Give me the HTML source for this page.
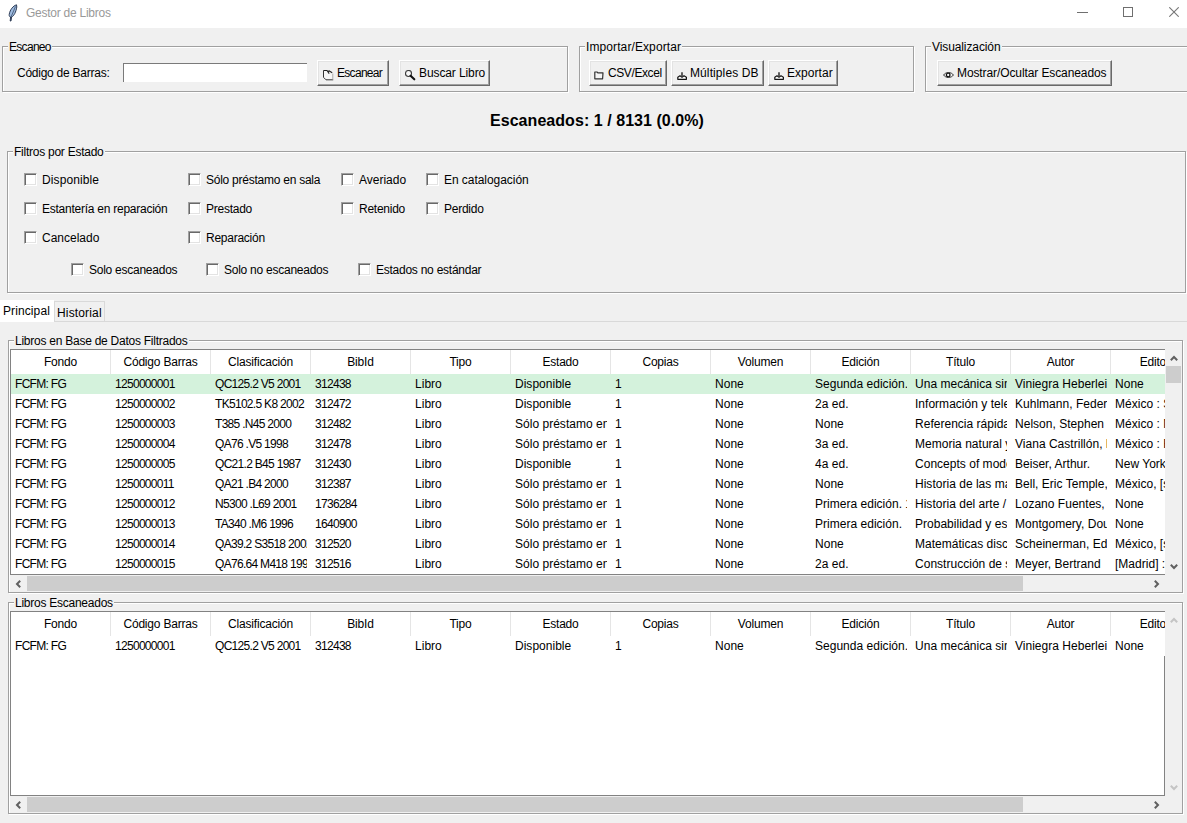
<!DOCTYPE html>
<html><head><meta charset="utf-8"><title>Gestor de Libros</title>
<style>
*{box-sizing:border-box;margin:0;padding:0}
html,body{width:1187px;height:823px;overflow:hidden}
body{position:relative;background:#f0f0f0;font-family:"Liberation Sans",sans-serif;font-size:12px;color:#000;letter-spacing:-0.25px}
.a{position:absolute;white-space:nowrap}
.title{position:absolute;left:0;top:0;width:1187px;height:28px;background:#fff}
.grp{position:absolute;border:1px solid #a0a0a0;box-shadow:1px 1px 0 #fff,inset 1px 1px 0 #fff}
.lbl{position:absolute;background:#f0f0f0;white-space:nowrap;line-height:14px;padding:1px 1px 0}
.btn{position:absolute;height:26px;border-top:1px solid #fff;border-left:1px solid #fff;border-right:1px solid #696969;border-bottom:1px solid #696969;box-shadow:inset -1px -1px 0 #a0a0a0,inset 1px 1px 0 #e3e3e3;background:#f0f0f0;white-space:nowrap;line-height:24px}
.btn svg{position:absolute;top:8px}
.btn span{position:absolute;top:0}
.cb{position:absolute;width:13px;height:13px;background:#fff;border-top:1px solid #a0a0a0;border-left:1px solid #a0a0a0;border-right:1px solid #fff;border-bottom:1px solid #fff;box-shadow:inset 1px 1px 0 #696969,inset -1px -1px 0 #e3e3e3}
.cbt{position:absolute;white-space:nowrap;line-height:14px}
.tv{position:absolute;left:10px;width:1155px;background:#fff;border:1px solid #828282}
.hdr{position:absolute;left:11px;width:1154px;height:24px;background:#fff;overflow:hidden}
.hc{position:absolute;top:0;width:100px;height:24px;line-height:25px;text-align:center;border-right:1px solid #e5e5e5;white-space:nowrap}
.row{position:absolute;left:11px;width:1154px;height:20px;overflow:hidden;background:#fff}
.row.sel{background:#d4f2dc}
.c{position:absolute;top:0;width:96px;padding-left:4px;height:20px;line-height:20px;overflow:hidden;white-space:nowrap}
.sb{position:absolute;background:#f0f0f0}
.thumb{position:absolute;background:#cdcdcd}
</style></head><body>
<!-- title bar -->
<div class="title"></div>
<svg class="a" style="left:8px;top:4px" width="10" height="18" viewBox="0 0 10 18">
 <path d="M8.5 0.8 C5 2 2 5.5 1.2 10.5 C1 12 1.6 13 2.6 13 L2.2 17 L3 17 L3.6 13 C6 12 8 8 8.8 3 Z" fill="#9dbbe0" stroke="#1d2a44" stroke-width="0.9"/>
 <path d="M7.5 2.5 L3 13" stroke="#1d2a44" stroke-width="0.6"/>
</svg>
<div class="a" style="left:26px;top:6px;color:#999;font-size:12px;line-height:14px">Gestor de Libros</div>
<div class="a" style="left:1077px;top:12px;width:11px;height:1px;background:#6f6f6f"></div>
<div class="a" style="left:1123px;top:7px;width:10px;height:10px;border:1px solid #6f6f6f"></div>
<svg class="a" style="left:1169px;top:7px" width="10" height="10" viewBox="0 0 10 10"><path d="M0.3 0.3 L9.7 9.7 M9.7 0.3 L0.3 9.7" stroke="#777" stroke-width="1.1"/></svg>

<!-- Escaneo -->
<div class="grp" style="left:2px;top:46px;width:566px;height:46px"></div>
<div class="lbl" style="left:8px;top:39px;letter-spacing:-0.7px">Escaneo</div>
<div class="a" style="left:17px;top:66px;line-height:14px">Código de Barras:</div>
<div class="a" style="left:123px;top:63px;width:184px;height:19px;background:#fff;border-top:1px solid #7a7a7a;border-left:1px solid #7a7a7a"></div>
<div class="btn" style="left:317px;top:60px;width:72px">
 <svg style="left:5px;top:9px" width="11" height="11" viewBox="0 0 11 11"><path d="M0.5 0.5 L4 0.5 L6 3.8 L9.5 2.8 L10.5 4 L10.5 10 L3.2 10 L0.5 7.5 Z" fill="#f6f6f6"/><path d="M0.5 0.5 L0.5 7.3 L3 9.8 L10.2 9.8" stroke="#333" stroke-width="1" fill="none"/><path d="M0.5 0.5 L4 0.5 L6.2 3.6 M5.2 2 L6 0.8 L9.2 2.8" stroke="#222" stroke-width="1.1" fill="none"/><path d="M9.8 3.5 L9.8 9.5" stroke="#aaa" stroke-width="1" fill="none"/></svg>
 <span style="left:19px;letter-spacing:-0.7px">Escanear</span></div>
<div class="btn" style="left:399px;top:60px;width:91px">
 <svg style="left:5px;top:9px" width="11" height="11" viewBox="0 0 11 11"><circle cx="3.5" cy="3.5" r="3" fill="#f8f8f8" stroke="#3a3a3a" stroke-width="1.1"/><path d="M5.6 5.8 L9.3 9.3" stroke="#111" stroke-width="2.1" stroke-linecap="round"/></svg>
 <span style="left:19px;letter-spacing:-0.1px">Buscar Libro</span></div>

<!-- Importar/Exportar -->
<div class="grp" style="left:579px;top:46px;width:335px;height:46px"></div>
<div class="lbl" style="left:585px;top:39px;letter-spacing:0.1px">Importar/Exportar</div>
<div class="btn" style="left:589px;top:60px;width:78px">
 <svg style="left:4px;top:10px" width="10" height="9" viewBox="0 0 10 9"><path d="M0.8 1 L3 1 L3.8 1.8 L9 1.8 L8.6 7.8 L0.8 7.8 Z" fill="#f4f4f4" stroke="#333" stroke-width="1.2" stroke-linejoin="round"/></svg>
 <span style="left:18px;letter-spacing:-0.4px">CSV/Excel</span></div>
<div class="btn" style="left:671px;top:60px;width:93px">
 <svg style="left:5px;top:11px" width="11" height="8" viewBox="0 0 11 8"><path d="M0.8 5.2 L3 3.8 L5 5.2 L7 3.8 L9.4 5.2 L9.4 7.3 L0.8 7.3 Z" fill="#fff" stroke="#111" stroke-width="1.2" stroke-linejoin="round"/><path d="M5 0.2 L5 4.2" stroke="#444" stroke-width="1.7"/></svg>
 <span style="left:18px;letter-spacing:0.1px">Múltiples DB</span></div>
<div class="btn" style="left:768px;top:60px;width:70px">
 <svg style="left:5px;top:11px" width="11" height="8" viewBox="0 0 11 8"><path d="M0.8 5.2 L3 3.8 L5 5.2 L7 3.8 L9.4 5.2 L9.4 7.3 L0.8 7.3 Z" fill="#fff" stroke="#111" stroke-width="1.2" stroke-linejoin="round"/><path d="M5 0.2 L5 4.2" stroke="#444" stroke-width="1.7"/></svg>
 <span style="left:18px;letter-spacing:0.05px">Exportar</span></div>

<!-- Visualizacion -->
<div class="grp" style="left:925px;top:46px;width:300px;height:46px"></div>
<div class="lbl" style="left:931px;top:39px;letter-spacing:-0.1px">Visualización</div>
<div class="btn" style="left:937px;top:60px;width:175px">
 <svg style="left:5px;top:10px" width="11" height="8" viewBox="0 0 11 8"><path d="M0.6 4 C2.5 0.8 8.5 0.8 10.4 4 C8.5 7.2 2.5 7.2 0.6 4 Z" fill="#f6f6f6" stroke="#333" stroke-width="1"/><circle cx="5.2" cy="4" r="1.8" fill="#fff" stroke="#111" stroke-width="1.3"/></svg>
 <span style="left:19px;letter-spacing:-0.1px">Mostrar/Ocultar Escaneados</span></div>

<!-- Escaneados label -->
<div class="a" style="left:490px;top:112px;font-weight:bold;font-size:16px;line-height:18px;letter-spacing:0.05px">Escaneados: 1 / 8131 (0.0%)</div>

<!-- Filtros -->
<div class="grp" style="left:7px;top:151px;width:1179px;height:142px"></div>
<div class="lbl" style="left:13px;top:144px">Filtros por Estado</div>

<div class="cb" style="left:24px;top:173px"></div><div class="cbt" style="left:42px;top:173px;letter-spacing:0.1px">Disponible</div>
<div class="cb" style="left:24px;top:202px"></div><div class="cbt" style="left:42px;top:202px">Estantería en reparación</div>
<div class="cb" style="left:24px;top:231px"></div><div class="cbt" style="left:42px;top:231px;letter-spacing:0px">Cancelado</div>
<div class="cb" style="left:188px;top:173px"></div><div class="cbt" style="left:206px;top:173px">Sólo préstamo en sala</div>
<div class="cb" style="left:188px;top:202px"></div><div class="cbt" style="left:206px;top:202px">Prestado</div>
<div class="cb" style="left:188px;top:231px"></div><div class="cbt" style="left:206px;top:231px">Reparación</div>
<div class="cb" style="left:341px;top:173px"></div><div class="cbt" style="left:359px;top:173px;letter-spacing:0px">Averiado</div>
<div class="cb" style="left:341px;top:202px"></div><div class="cbt" style="left:359px;top:202px">Retenido</div>
<div class="cb" style="left:426px;top:173px"></div><div class="cbt" style="left:444px;top:173px;letter-spacing:-0.05px">En catalogación</div>
<div class="cb" style="left:426px;top:202px"></div><div class="cbt" style="left:444px;top:202px">Perdido</div>
<div class="cb" style="left:71px;top:263px"></div><div class="cbt" style="left:89px;top:263px">Solo escaneados</div>
<div class="cb" style="left:206px;top:263px"></div><div class="cbt" style="left:224px;top:263px">Solo no escaneados</div>
<div class="cb" style="left:358px;top:263px"></div><div class="cbt" style="left:376px;top:263px">Estados no estándar</div>

<!-- Tabs -->
<div class="a" style="left:0;top:321px;width:1187px;height:1px;background:#d9d9d9"></div>
<div class="a" style="left:54px;top:301px;width:51px;height:20px;background:#f0f0f0;border:1px solid #d9d9d9;border-bottom:none"></div>
<div class="a" style="left:0;top:300px;width:54px;height:22px;background:#fff"></div>
<div class="a" style="left:3px;top:304px;line-height:14px;letter-spacing:0.1px">Principal</div>
<div class="a" style="left:57px;top:306px;line-height:14px;letter-spacing:0.15px">Historial</div>

<!-- Libros en Base de Datos Filtrados -->
<div class="grp" style="left:8px;top:340px;width:1175px;height:253px"></div>
<div class="lbl" style="left:14px;top:333px">Libros en Base de Datos Filtrados</div>
<div class="tv" style="top:349px;height:226px"></div>
<div class="hdr" style="top:350px"><div class="hc" style="left:0px;letter-spacing:-0.2px">Fondo</div><div class="hc" style="left:100px;letter-spacing:-0.2px">Código Barras</div><div class="hc" style="left:200px;letter-spacing:-0.2px">Clasificación</div><div class="hc" style="left:300px;letter-spacing:-0.2px">BibId</div><div class="hc" style="left:400px;letter-spacing:-0.2px">Tipo</div><div class="hc" style="left:500px;letter-spacing:-0.2px">Estado</div><div class="hc" style="left:600px;letter-spacing:-0.2px">Copias</div><div class="hc" style="left:700px;letter-spacing:-0.2px">Volumen</div><div class="hc" style="left:800px;letter-spacing:-0.2px">Edición</div><div class="hc" style="left:900px;letter-spacing:-0.2px">Título</div><div class="hc" style="left:1000px;letter-spacing:-0.2px">Autor</div><div class="hc" style="left:1100px;letter-spacing:-0.2px">Editorial</div></div>
<div class="row sel" style="top:374px"><div class="c" style="left:0px;letter-spacing:-0.7px">FCFM: FG</div><div class="c" style="left:100px;letter-spacing:-0.7px">1250000001</div><div class="c" style="left:200px;letter-spacing:-0.7px">QC125.2 V5 2001</div><div class="c" style="left:300px;letter-spacing:-0.7px">312438</div><div class="c" style="left:400px;letter-spacing:0.02px">Libro</div><div class="c" style="left:500px;letter-spacing:0.02px">Disponible</div><div class="c" style="left:600px;letter-spacing:0.02px">1</div><div class="c" style="left:700px;letter-spacing:0.02px">None</div><div class="c" style="left:800px;letter-spacing:0.02px">Segunda edición.</div><div class="c" style="left:900px;letter-spacing:0.02px">Una mecánica sin fronteras</div><div class="c" style="left:1000px;letter-spacing:0.02px">Viniegra Heberlein, Fermín</div><div class="c" style="left:1100px;letter-spacing:0.02px">None</div></div>
<div class="row" style="top:394px"><div class="c" style="left:0px;letter-spacing:-0.7px">FCFM: FG</div><div class="c" style="left:100px;letter-spacing:-0.7px">1250000002</div><div class="c" style="left:200px;letter-spacing:-0.7px">TK5102.5 K8 2002</div><div class="c" style="left:300px;letter-spacing:-0.7px">312472</div><div class="c" style="left:400px;letter-spacing:0.02px">Libro</div><div class="c" style="left:500px;letter-spacing:0.02px">Disponible</div><div class="c" style="left:600px;letter-spacing:0.02px">1</div><div class="c" style="left:700px;letter-spacing:0.02px">None</div><div class="c" style="left:800px;letter-spacing:0.02px">2a ed.</div><div class="c" style="left:900px;letter-spacing:0.02px">Información y telecomunicaciones</div><div class="c" style="left:1000px;letter-spacing:0.02px">Kuhlmann, Federico</div><div class="c" style="left:1100px;letter-spacing:0.02px">México : Siglo</div></div>
<div class="row" style="top:414px"><div class="c" style="left:0px;letter-spacing:-0.7px">FCFM: FG</div><div class="c" style="left:100px;letter-spacing:-0.7px">1250000003</div><div class="c" style="left:200px;letter-spacing:-0.7px">T385 .N45 2000</div><div class="c" style="left:300px;letter-spacing:-0.7px">312482</div><div class="c" style="left:400px;letter-spacing:0.02px">Libro</div><div class="c" style="left:500px;letter-spacing:0.02px">Sólo préstamo en sala</div><div class="c" style="left:600px;letter-spacing:0.02px">1</div><div class="c" style="left:700px;letter-spacing:0.02px">None</div><div class="c" style="left:800px;letter-spacing:0.02px">None</div><div class="c" style="left:900px;letter-spacing:0.02px">Referencia rápida</div><div class="c" style="left:1000px;letter-spacing:0.02px">Nelson, Stephen L.</div><div class="c" style="left:1100px;letter-spacing:0.02px">México : McGraw</div></div>
<div class="row" style="top:434px"><div class="c" style="left:0px;letter-spacing:-0.7px">FCFM: FG</div><div class="c" style="left:100px;letter-spacing:-0.7px">1250000004</div><div class="c" style="left:200px;letter-spacing:-0.7px">QA76 .V5 1998</div><div class="c" style="left:300px;letter-spacing:-0.7px">312478</div><div class="c" style="left:400px;letter-spacing:0.02px">Libro</div><div class="c" style="left:500px;letter-spacing:0.02px">Sólo préstamo en sala</div><div class="c" style="left:600px;letter-spacing:0.02px">1</div><div class="c" style="left:700px;letter-spacing:0.02px">None</div><div class="c" style="left:800px;letter-spacing:0.02px">3a ed.</div><div class="c" style="left:900px;letter-spacing:0.02px">Memoria natural y artificial</div><div class="c" style="left:1000px;letter-spacing:0.02px">Viana Castrillón, Luis</div><div class="c" style="left:1100px;letter-spacing:0.02px">México : FCE</div></div>
<div class="row" style="top:454px"><div class="c" style="left:0px;letter-spacing:-0.7px">FCFM: FG</div><div class="c" style="left:100px;letter-spacing:-0.7px">1250000005</div><div class="c" style="left:200px;letter-spacing:-0.7px">QC21.2 B45 1987</div><div class="c" style="left:300px;letter-spacing:-0.7px">312430</div><div class="c" style="left:400px;letter-spacing:0.02px">Libro</div><div class="c" style="left:500px;letter-spacing:0.02px">Disponible</div><div class="c" style="left:600px;letter-spacing:0.02px">1</div><div class="c" style="left:700px;letter-spacing:0.02px">None</div><div class="c" style="left:800px;letter-spacing:0.02px">4a ed.</div><div class="c" style="left:900px;letter-spacing:0.02px">Concepts of modern physics</div><div class="c" style="left:1000px;letter-spacing:0.02px">Beiser, Arthur.</div><div class="c" style="left:1100px;letter-spacing:0.02px">New York</div></div>
<div class="row" style="top:474px"><div class="c" style="left:0px;letter-spacing:-0.7px">FCFM: FG</div><div class="c" style="left:100px;letter-spacing:-0.7px">1250000011</div><div class="c" style="left:200px;letter-spacing:-0.7px">QA21 .B4 2000</div><div class="c" style="left:300px;letter-spacing:-0.7px">312387</div><div class="c" style="left:400px;letter-spacing:0.02px">Libro</div><div class="c" style="left:500px;letter-spacing:0.02px">Sólo préstamo en sala</div><div class="c" style="left:600px;letter-spacing:0.02px">1</div><div class="c" style="left:700px;letter-spacing:0.02px">None</div><div class="c" style="left:800px;letter-spacing:0.02px">None</div><div class="c" style="left:900px;letter-spacing:0.02px">Historia de las matemáticas</div><div class="c" style="left:1000px;letter-spacing:0.02px">Bell, Eric Temple,</div><div class="c" style="left:1100px;letter-spacing:0.02px">México, [s.n.]</div></div>
<div class="row" style="top:494px"><div class="c" style="left:0px;letter-spacing:-0.7px">FCFM: FG</div><div class="c" style="left:100px;letter-spacing:-0.7px">1250000012</div><div class="c" style="left:200px;letter-spacing:-0.7px">N5300 .L69 2001</div><div class="c" style="left:300px;letter-spacing:-0.7px">1736284</div><div class="c" style="left:400px;letter-spacing:0.02px">Libro</div><div class="c" style="left:500px;letter-spacing:0.02px">Sólo préstamo en sala</div><div class="c" style="left:600px;letter-spacing:0.02px">1</div><div class="c" style="left:700px;letter-spacing:0.02px">None</div><div class="c" style="left:800px;letter-spacing:0.02px">Primera edición. 1</div><div class="c" style="left:900px;letter-spacing:0.02px">Historia del arte / </div><div class="c" style="left:1000px;letter-spacing:0.02px">Lozano Fuentes, José</div><div class="c" style="left:1100px;letter-spacing:0.02px">None</div></div>
<div class="row" style="top:514px"><div class="c" style="left:0px;letter-spacing:-0.7px">FCFM: FG</div><div class="c" style="left:100px;letter-spacing:-0.7px">1250000013</div><div class="c" style="left:200px;letter-spacing:-0.7px">TA340 .M6 1996</div><div class="c" style="left:300px;letter-spacing:-0.7px">1640900</div><div class="c" style="left:400px;letter-spacing:0.02px">Libro</div><div class="c" style="left:500px;letter-spacing:0.02px">Sólo préstamo en sala</div><div class="c" style="left:600px;letter-spacing:0.02px">1</div><div class="c" style="left:700px;letter-spacing:0.02px">None</div><div class="c" style="left:800px;letter-spacing:0.02px">Primera edición.</div><div class="c" style="left:900px;letter-spacing:0.02px">Probabilidad y estadística</div><div class="c" style="left:1000px;letter-spacing:0.02px">Montgomery, Douglas</div><div class="c" style="left:1100px;letter-spacing:0.02px">None</div></div>
<div class="row" style="top:534px"><div class="c" style="left:0px;letter-spacing:-0.7px">FCFM: FG</div><div class="c" style="left:100px;letter-spacing:-0.7px">1250000014</div><div class="c" style="left:200px;letter-spacing:-0.7px">QA39.2 S3518 2002</div><div class="c" style="left:300px;letter-spacing:-0.7px">312520</div><div class="c" style="left:400px;letter-spacing:0.02px">Libro</div><div class="c" style="left:500px;letter-spacing:0.02px">Sólo préstamo en sala</div><div class="c" style="left:600px;letter-spacing:0.02px">1</div><div class="c" style="left:700px;letter-spacing:0.02px">None</div><div class="c" style="left:800px;letter-spacing:0.02px">None</div><div class="c" style="left:900px;letter-spacing:0.02px">Matemáticas discretas</div><div class="c" style="left:1000px;letter-spacing:0.02px">Scheinerman, Edward</div><div class="c" style="left:1100px;letter-spacing:0.02px">México, [s.n.]</div></div>
<div class="row" style="top:554px"><div class="c" style="left:0px;letter-spacing:-0.7px">FCFM: FG</div><div class="c" style="left:100px;letter-spacing:-0.7px">1250000015</div><div class="c" style="left:200px;letter-spacing:-0.7px">QA76.64 M418 1999</div><div class="c" style="left:300px;letter-spacing:-0.7px">312516</div><div class="c" style="left:400px;letter-spacing:0.02px">Libro</div><div class="c" style="left:500px;letter-spacing:0.02px">Sólo préstamo en sala</div><div class="c" style="left:600px;letter-spacing:0.02px">1</div><div class="c" style="left:700px;letter-spacing:0.02px">None</div><div class="c" style="left:800px;letter-spacing:0.02px">2a ed.</div><div class="c" style="left:900px;letter-spacing:0.02px">Construcción de software</div><div class="c" style="left:1000px;letter-spacing:0.02px">Meyer, Bertrand</div><div class="c" style="left:1100px;letter-spacing:0.02px">[Madrid] : Prentice</div></div>
<div class="sb" style="left:1165px;top:350px;width:17px;height:224px"></div>
<div class="thumb" style="left:1166px;top:366px;width:15px;height:17px"></div>
<div class="sb" style="left:11px;top:575px;width:1154px;height:16px"></div>
<div class="thumb" style="left:27px;top:576px;width:996px;height:15px"></div>

<svg class="a" style="left:1170px;top:355px" width="8" height="6" viewBox="0 0 8 6"><path d="M0.8 5.2 L4 2 L7.2 5.2" stroke="#606060" stroke-width="2" fill="none"/></svg>
<svg class="a" style="left:1170px;top:564px" width="8" height="6" viewBox="0 0 8 6"><path d="M0.8 0.8 L4 4 L7.2 0.8" stroke="#606060" stroke-width="2" fill="none"/></svg>
<svg class="a" style="left:15px;top:580px" width="6" height="8" viewBox="0 0 6 8"><path d="M5.2 0.8 L2 4 L5.2 7.2" stroke="#606060" stroke-width="2" fill="none"/></svg>
<svg class="a" style="left:1154px;top:580px" width="6" height="8" viewBox="0 0 6 8"><path d="M0.8 0.8 L4 4 L0.8 7.2" stroke="#606060" stroke-width="2" fill="none"/></svg>
<!-- Libros Escaneados -->
<div class="grp" style="left:8px;top:602px;width:1175px;height:212px"></div>
<div class="lbl" style="left:14px;top:595px">Libros Escaneados</div>
<div class="tv" style="top:611px;height:185px"></div>
<div class="hdr" style="top:612px"><div class="hc" style="left:0px;letter-spacing:-0.2px">Fondo</div><div class="hc" style="left:100px;letter-spacing:-0.2px">Código Barras</div><div class="hc" style="left:200px;letter-spacing:-0.2px">Clasificación</div><div class="hc" style="left:300px;letter-spacing:-0.2px">BibId</div><div class="hc" style="left:400px;letter-spacing:-0.2px">Tipo</div><div class="hc" style="left:500px;letter-spacing:-0.2px">Estado</div><div class="hc" style="left:600px;letter-spacing:-0.2px">Copias</div><div class="hc" style="left:700px;letter-spacing:-0.2px">Volumen</div><div class="hc" style="left:800px;letter-spacing:-0.2px">Edición</div><div class="hc" style="left:900px;letter-spacing:-0.2px">Título</div><div class="hc" style="left:1000px;letter-spacing:-0.2px">Autor</div><div class="hc" style="left:1100px;letter-spacing:-0.2px">Editorial</div></div>
<div class="row" style="top:636px"><div class="c" style="left:0px;letter-spacing:-0.7px">FCFM: FG</div><div class="c" style="left:100px;letter-spacing:-0.7px">1250000001</div><div class="c" style="left:200px;letter-spacing:-0.7px">QC125.2 V5 2001</div><div class="c" style="left:300px;letter-spacing:-0.7px">312438</div><div class="c" style="left:400px;letter-spacing:0.02px">Libro</div><div class="c" style="left:500px;letter-spacing:0.02px">Disponible</div><div class="c" style="left:600px;letter-spacing:0.02px">1</div><div class="c" style="left:700px;letter-spacing:0.02px">None</div><div class="c" style="left:800px;letter-spacing:0.02px">Segunda edición.</div><div class="c" style="left:900px;letter-spacing:0.02px">Una mecánica sin fronteras</div><div class="c" style="left:1000px;letter-spacing:0.02px">Viniegra Heberlein, Fermín</div><div class="c" style="left:1100px;letter-spacing:0.02px">None</div></div>
<div class="sb" style="left:1165px;top:612px;width:17px;height:183px"></div>
<div class="sb" style="left:11px;top:796px;width:1154px;height:16px"></div>
<div class="thumb" style="left:27px;top:797px;width:996px;height:15px"></div>
<svg class="a" style="left:1170px;top:617px" width="8" height="6" viewBox="0 0 8 6"><path d="M0.8 5.2 L4 2 L7.2 5.2" stroke="#c4c4c4" stroke-width="2" fill="none"/></svg>
<svg class="a" style="left:1170px;top:785px" width="8" height="6" viewBox="0 0 8 6"><path d="M0.8 0.8 L4 4 L7.2 0.8" stroke="#c4c4c4" stroke-width="2" fill="none"/></svg>
<svg class="a" style="left:15px;top:801px" width="6" height="8" viewBox="0 0 6 8"><path d="M5.2 0.8 L2 4 L5.2 7.2" stroke="#606060" stroke-width="2" fill="none"/></svg>
<svg class="a" style="left:1154px;top:801px" width="6" height="8" viewBox="0 0 6 8"><path d="M0.8 0.8 L4 4 L0.8 7.2" stroke="#606060" stroke-width="2" fill="none"/></svg>
</body></html>
